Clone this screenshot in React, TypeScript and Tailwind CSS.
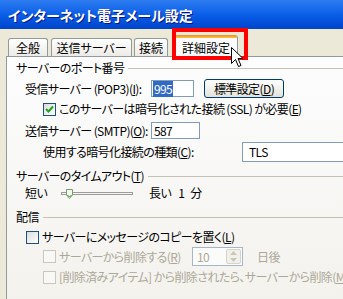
import type { ReactNode } from "react";

const font = "[font-family:'Noto_Sans_CJK_JP',sans-serif] [font-feature-settings:'palt']";

function Heading({ children }: { children: ReactNode }) {
  return (
    <div className="flex h-[16px] items-center">
      <span className="whitespace-nowrap">{children}</span>
      <div className="ml-[4px] h-px flex-1 bg-[#c2c2b6]" />
    </div>
  );
}

function Checkbox({ checked, disabled }: { checked?: boolean; disabled?: boolean }) {
  return (
    <div
      className={
        "flex h-[13px] w-[13px] shrink-0 items-center justify-center border " +
        (disabled ? "border-[#cac8bb] bg-[#f8f8f6]" : "border-[#1c5180] bg-gradient-to-br from-[#dcdcd7] to-white")
      }
    >
      {checked && (
        <svg width="9" height="9" viewBox="0 0 9 9">
          <path d="M1 4 L3.5 6.5 L8 1.5" stroke="#21a121" strokeWidth="2" fill="none" />
        </svg>
      )}
    </div>
  );
}

function Tab({ label, className }: { label: string; className: string }) {
  return (
    <div
      className={
        "flex h-[18px] items-center justify-center rounded-t-[3px] border border-b-0 border-[#919b9c] bg-gradient-to-b from-white to-[#ecebe6] " +
        className
      }
    >
      {label}
    </div>
  );
}

export default function App() {
  return (
    <div className={"relative h-[299px] w-[343px] overflow-hidden bg-[#ece9d8] text-[12px] leading-[16px] text-black " + font}>
      {/* title bar */}
      <div className="flex h-[29px] items-center bg-gradient-to-b from-[#2d7cf0] via-[#0a5ee8] to-[#0043cc] pl-[8px]">
        <span className="text-[14px] font-bold text-white [text-shadow:1px_1px_#0a1883]">
          インターネット電子メール設定
        </span>
      </div>

      <div className="flex h-[270px]">
        <div className="w-[4px] bg-gradient-to-r from-[#0831d9] to-[#166aee]" />
        <div className="flex flex-1 flex-col">
          {/* tabs */}
          <div className="relative z-10 flex h-[27px] items-end pl-[8px]">
            <Tab label="全般" className="w-[40px]" />
            <Tab label="送信サーバー" className="ml-[3px] w-[81px]" />
            <Tab label="接続" className="ml-[2px] w-[34px]" />
            <div className="mb-[-1px] ml-[6px] flex h-[22px] w-[64px] flex-col overflow-hidden rounded-t-[3px] border-x border-[#919b9c] bg-[#fcfcfe]">
              <div className="h-[3px] bg-gradient-to-b from-[#e68b2c] to-[#ffc73c]" />
              <div className="flex flex-1 items-center justify-center">詳細設定</div>
            </div>
          </div>

          {/* panel */}
          <div className="ml-[6px] flex flex-1 flex-col border-l border-t border-[#919b9c] bg-gradient-to-b from-[#fdfdfe] to-[#f3f2ed] pl-[9px] tracking-[-0.6px]">
            <div className="mt-[3px]">
              <Heading>サーバーのポート番号</Heading>
            </div>

            <div className="ml-[9px] mt-[4px] flex h-[17px] items-center">
              <span className="w-[126px] whitespace-nowrap">
                受信サーバー (POP3)(<u>I</u>):
              </span>
              <div className="flex h-[17px] w-[43px] items-center border border-[#7f9db9] bg-white pl-[1px]">
                <span className="bg-[#316ac5] px-[1px] text-white">995</span>
              </div>
              <div className="ml-[10px] flex h-[19px] w-[80px] items-center justify-center rounded-[3px] border border-[#003c74] bg-gradient-to-b from-white to-[#e3e2da]">
                標準設定(<u>D</u>)
              </div>
            </div>

            <div className="ml-[27px] mt-[4px] flex h-[16px] items-center">
              <Checkbox checked />
              <span className="ml-[3px] whitespace-nowrap">
                このサーバーは暗号化された接続 (SSL) が必要(<u>E</u>)
              </span>
            </div>

            <div className="ml-[9px] mt-[5px] flex h-[17px] items-center">
              <span className="w-[126px] whitespace-nowrap">
                送信サーバー (SMTP)(<u>O</u>):
              </span>
              <div className="flex h-[17px] w-[49px] items-center border border-[#7f9db9] bg-white pl-[2px]">587</div>
            </div>

            <div className="ml-[27px] mt-[3px] flex h-[20px] items-center">
              <span className="w-[199px] whitespace-nowrap">
                使用する暗号化接続の種類(<u>C</u>):
              </span>
              <div className="flex h-[20px] flex-1 items-center border border-r-0 border-[#7f9db9] bg-white pl-[6px]">TLS</div>
            </div>

            <div className="mt-[6px]">
              <Heading>
                サーバーのタイムアウト(<u>T</u>)
              </Heading>
            </div>

            <div className="ml-[9px] mt-[1px] flex h-[16px] items-center">
              <span className="w-[36px]">短い</span>
              <div className="relative h-[16px] w-[72px]">
                <div className="absolute left-0 right-0 top-[7px] h-[3px] border border-[#9d9c99] bg-[#f3f3ef]" />
                <svg className="absolute left-[5px] top-[4px]" width="7" height="10" viewBox="0 0 7 10">
                  <path d="M0.5 0.5 H6.5 V6 L3.5 9.5 L0.5 6 Z" fill="#f6f6f2" stroke="#7a9a6a" />
                  <path d="M1.5 6 L3.5 8 L5.5 6" stroke="#21a121" fill="none" />
                </svg>
              </div>
              <span className="ml-[16px] whitespace-nowrap">長い</span>
              <span className="ml-[7px]">1</span>
              <span className="ml-[6px]">分</span>
            </div>

            <div className="mt-[8px]">
              <Heading>配信</Heading>
            </div>

            <div className="ml-[10px] mt-[4px] flex h-[16px] items-center">
              <Checkbox />
              <span className="ml-[3px] whitespace-nowrap">
                サーバーにメッセージのコピーを置く(<u>L</u>)
              </span>
            </div>

            <div className="ml-[27px] mt-[2px] flex h-[19px] items-center text-[#aca899]">
              <Checkbox disabled />
              <span className="ml-[3px] w-[133px] whitespace-nowrap">
                サーバーから削除する(<u>R</u>)
              </span>
              <div className="flex h-[19px] w-[51px] items-center border border-[#a5b6c8] bg-[#fbfbf9] pl-[4px]">
                <span className="flex-1">10</span>
                <div className="mr-[1px] flex h-[15px] w-[15px] flex-col rounded-[2px] border border-[#d6d4ca] bg-[#f1f0ea]">
                  <div className="flex flex-1 items-center justify-center">
                    <svg width="7" height="4" viewBox="0 0 7 4">
                      <path d="M0 4 L3.5 0 L7 4 Z" fill="#c9c7ba" />
                    </svg>
                  </div>
                  <div className="flex flex-1 items-center justify-center">
                    <svg width="7" height="4" viewBox="0 0 7 4">
                      <path d="M0 0 L3.5 4 L7 0 Z" fill="#c9c7ba" />
                    </svg>
                  </div>
                </div>
              </div>
              <span className="ml-[14px]">日後</span>
            </div>

            <div className="ml-[27px] mt-[3px] flex h-[16px] items-center text-[#aca899]">
              <Checkbox disabled />
              <span className="ml-[3px] whitespace-nowrap">
                [削除済みアイテム] から削除されたら、サーバーから削除(<u>M</u>)
              </span>
            </div>
          </div>
        </div>
      </div>

      {/* red highlight around tab */}
      <div className="absolute left-[172px] top-[28px] z-20 h-[32px] w-[76px] border-[4px] border-[#ff0000]" />

      {/* mouse cursor */}
      <svg className="absolute left-[231px] top-[47px] z-30" width="13" height="21" viewBox="0 0 13 21">
        <path
          d="M0.5 0.5 L0.5 16.5 L4.5 12.5 L7.5 19.5 L10 18.5 L7 11.5 L12 11.5 Z"
          fill="white"
          stroke="black"
          strokeWidth="1"
          strokeLinejoin="miter"
        />
      </svg>
    </div>
  );
}
